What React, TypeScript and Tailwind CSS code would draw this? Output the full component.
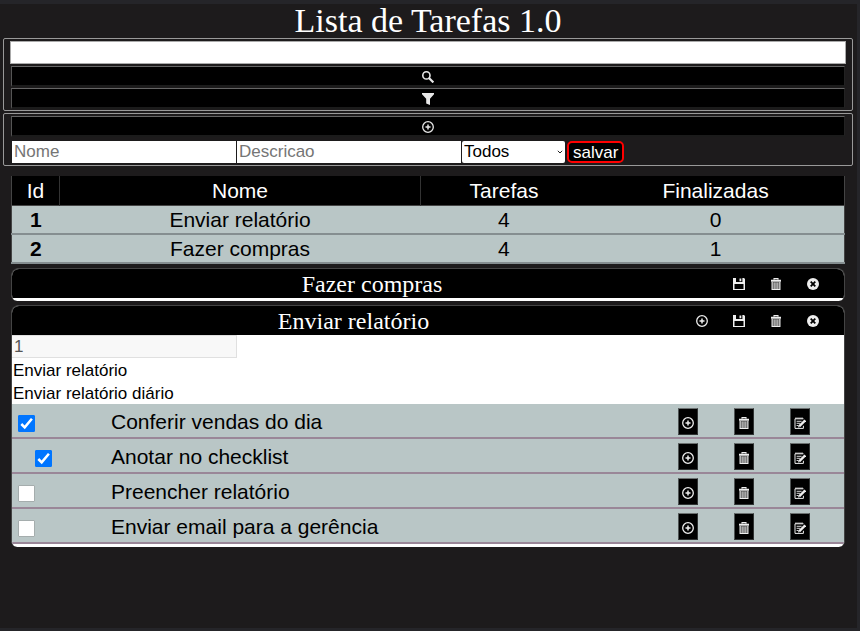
import { useState } from "react";
import type { ReactNode } from "react";

function Icon({ children }: { children: ReactNode }) {
  return (
    <svg viewBox="0 0 12 12" className="block h-3 w-3 shrink-0" fill="none" stroke="currentColor" aria-hidden="true">
      {children}
    </svg>
  );
}

const SearchIcon = () => (
  <Icon>
    <circle cx="4.4" cy="4.4" r="3.6" strokeWidth="1.6" />
    <path d="M7 7l4.400 4.400" strokeWidth="2.200" />
  </Icon>
);

const FilterIcon = () => (
  <Icon>
    <path d="M0 0h12v1.300L8 5.800V12L4.200 10.600V5.800L0 1.300z" fill="currentColor" stroke="none" />
  </Icon>
);

const AddIcon = () => (
  <Icon>
    <circle cx="6" cy="6" r="5.300" strokeWidth="1.300" />
    <path d="M6 3.500v5M3.500 6h5" strokeWidth="1.500" />
  </Icon>
);

const SaveIcon = () => (
  <Icon>
    <path
      fill="currentColor"
      stroke="none"
      fillRule="evenodd"
      d="M0 0h11L12 1V12H0zM3 0v4h6.400V0zM1.500 6v5h9V6zM6.500 0.500h1.800v2.700H6.500z"
    />
  </Icon>
);

const TrashIcon = () => (
  <Icon>
    <path d="M4 1.800V.6h4v1.200" strokeWidth="1.100" />
    <path d="M1 2.700h10" strokeWidth="2" />
    <path d="M1.800 4h8.400v8H1.800z" fill="currentColor" fillOpacity="0.35" stroke="none" />
    <path d="M2.100 4v7.500h7.800V4" strokeWidth="1.100" />
    <path d="M4.200 4.500v6.500M6 4.500v6.500M7.800 4.500v6.500" strokeWidth="0.800" />
  </Icon>
);

const CloseIcon = () => (
  <Icon>
    <circle cx="6" cy="6" r="6" fill="currentColor" stroke="none" />
    <path d="M3.700 3.700l4.600 4.600M8.300 3.700L3.700 8.300" stroke="#000" strokeWidth="1.800" />
  </Icon>
);

const EditIcon = () => (
  <Icon>
    <path d="M9.500 1.800H1v9.600h8.400V8.800" strokeWidth="1" />
    <path d="M2 .4v1.600M4 .4v1.600M6 .4v1.600M8 .4v1.600" strokeWidth="1" />
    <path d="M2.600 4.300h5M2.600 6.300h3.600M2.600 8.500h2" strokeWidth="0.900" />
    <path d="M5.400 9.200L11.300 3.300" strokeWidth="2.500" />
    <path d="M4 10.600l.6-2.200 1.600 1.600z" fill="currentColor" stroke="none" />
  </Icon>
);

function WideButton({ label, children }: { label: string; children: ReactNode }) {
  return (
    <button
      type="button"
      aria-label={label}
      className="mx-px flex h-[21px] items-center justify-center border border-t-[#666] border-r-[#222] border-b-2 border-b-[#1b1b1b] border-l-[#555] bg-black pt-px text-[#e8e8e8]"
    >
      {children}
    </button>
  );
}

function HeaderButton({ label, children }: { label: string; children: ReactNode }) {
  return (
    <button type="button" aria-label={label} className="flex h-full w-[37px] items-center justify-center text-[#eee]">
      {children}
    </button>
  );
}

function RowButton({ label, children }: { label: string; children: ReactNode }) {
  return (
    <button
      type="button"
      aria-label={label}
      className="flex h-[27px] w-5 items-center justify-center border border-t-[#6b7070] border-r-[#303333] border-b-[#303333] border-l-[#505555] bg-black pt-0.5 text-[#eee]"
    >
      {children}
    </button>
  );
}

function Card({ title, canAdd, children }: { title: string; canAdd?: boolean; children?: ReactNode }) {
  return (
    <section className="overflow-hidden rounded-lg rounded-b-md border-x border-t border-[#444] bg-white pb-[3px]">
      <header className="flex h-[29px] items-center bg-black pr-[13px] pl-3 text-white">
        <h2 className="flex-1 text-center font-['Liberation_Serif',serif] text-2xl leading-7">{title}</h2>
        {canAdd && (
          <HeaderButton label="Adicionar"><AddIcon /></HeaderButton>
        )}
        <HeaderButton label="Salvar"><SaveIcon /></HeaderButton>
        <HeaderButton label="Excluir"><TrashIcon /></HeaderButton>
        <HeaderButton label="Fechar"><CloseIcon /></HeaderButton>
      </header>
      {children}
    </section>
  );
}

const lists = [
  { id: 1, name: "Enviar relatório", tasks: 4, done: 0 },
  { id: 2, name: "Fazer compras", tasks: 4, done: 1 },
];

const initialTasks = [
  { name: "Conferir vendas do dia", done: true, nested: false },
  { name: "Anotar no checklist", done: true, nested: true },
  { name: "Preencher relatório", done: false, nested: false },
  { name: "Enviar email para a gerência", done: false, nested: false },
];

export default function App() {
  const [tasks, setTasks] = useState(initialTasks);
  const toggle = (index: number) =>
    setTasks(tasks.map((t, i) => (i === index ? { ...t, done: !t.done } : t)));

  return (
    <main className="min-h-screen border-t-4 border-r-[3px] border-b-[3px] border-[#252529] bg-[#1d1b1c] pr-1 pl-[3px] font-['Liberation_Sans',Arial,sans-serif] text-black">
      <h1 className="text-center font-['Liberation_Serif',serif] text-[34px] leading-[34px] text-white">
        Lista de Tarefas 1.0
      </h1>

      <form className="flex flex-col gap-px rounded-xs border border-[#999] px-1.5 pt-0.5 pb-px" onSubmit={(e) => e.preventDefault()}>
        <input aria-label="Pesquisar" className="mb-px h-[23px] w-full border border-[#aaa] bg-white px-1 text-[17px]" />
        <WideButton label="Pesquisar"><SearchIcon /></WideButton>
        <WideButton label="Filtrar"><FilterIcon /></WideButton>
      </form>

      <form className="mt-0.5 flex flex-col gap-1 rounded-xs border border-[#999] px-1.5 pt-0.5 pb-0.5" onSubmit={(e) => e.preventDefault()}>
        <WideButton label="Adicionar"><AddIcon /></WideButton>
        <div className="ml-0.5 flex h-[22px] gap-px text-[17px]">
          <input aria-label="Nome" placeholder="Nome" className="w-56 bg-white px-0.5 placeholder:text-[#757575]" />
          <input aria-label="Descricao" placeholder="Descricao" className="w-56 bg-white px-0.5 placeholder:text-[#757575]" />
          <div className="relative w-[103px]">
            <select aria-label="Filtro" className="block h-full w-full appearance-none rounded-xs bg-white pl-0.5 leading-[22px]">
              <option>Todos</option>
            </select>
            <svg viewBox="0 0 6 4" className="pointer-events-none absolute top-[9px] right-0.5 h-1 w-1.5" fill="none" stroke="#222" aria-hidden="true">
              <path d="M.8.8L3 3 5.200.8" />
            </svg>
          </div>
          <button type="submit" className="ml-px flex items-center rounded-[5px] border-2 border-[#f00] bg-black px-1 pt-0.5 text-white">
            salvar
          </button>
        </div>
      </form>

      <div className="mt-2.5 mr-2 ml-2 flex flex-col gap-1">
        <table className="w-full table-fixed border-collapse border-x border-[#444] text-center text-[21px] leading-[27px]">
          <colgroup>
            <col className="w-12" />
            <col className="w-[361px]" />
            <col className="w-[20%]" />
            <col />
          </colgroup>
          <thead className="bg-black text-white">
            <tr className="h-[29px] border-b border-[#444]">
              <th className="border-r border-[#333] p-0 font-normal">Id</th>
              <th className="border-r border-[#333] p-0 font-normal">Nome</th>
              <th className="p-0 font-normal">Tarefas</th>
              <th className="p-0 font-normal">Finalizadas</th>
            </tr>
          </thead>
          <tbody className="bg-[#b9c6c6]">
            {lists.map((list) => (
              <tr key={list.id} className="h-[29px] border-b-2 border-[#858e90]">
                <th className="p-0">{list.id}</th>
                <td className="p-0">{list.name}</td>
                <td className="p-0">{list.tasks}</td>
                <td className="p-0">{list.done}</td>
              </tr>
            ))}
          </tbody>
        </table>

        <Card title="Fazer compras" />

        <Card title="Enviar relatório" canAdd>
          <div className="flex flex-col items-start text-[17px]">
            <input aria-label="Id" disabled defaultValue="1" className="h-[23px] w-[225px] border border-l-0 border-[#e0e0e0] bg-[#f8f8f8] px-0.5 text-[#555]" />
            <input aria-label="Nome" defaultValue="Enviar relatório" className="h-[23px] w-full px-px pt-0.5" />
            <input aria-label="Descricao" defaultValue="Enviar relatório diário" className="h-[23px] w-full px-px pt-0.5" />
          </div>
          <ul className="bg-[#b9c6c6]">
            {tasks.map((task, i) => (
              <li key={task.name} className="flex h-[35px] items-center border-b-2 border-[#9a8798] pt-0.5 pr-[34px] text-[21px]">
                <div className={task.nested ? "w-[99px] pt-1 pl-[23px]" : "w-[99px] pt-1 pl-1.5"}>
                  <div className="relative h-[17px] w-[17px]">
                    <input
                      id={`task-${i}`}
                      type="checkbox"
                      checked={task.done}
                      onChange={() => toggle(i)}
                      className="block h-full w-full appearance-none rounded-[1px] border border-[#a5adad] bg-white checked:border-[#0075ff] checked:bg-[#0075ff]"
                    />
                    {task.done && (
                      <svg viewBox="0 0 17 17" className="pointer-events-none absolute inset-0" fill="none" stroke="#fff" strokeWidth="2.500" aria-hidden="true">
                        <path d="M3.300 9l3.400 3.400L13.900 3.800" />
                      </svg>
                    )}
                  </div>
                </div>
                <label htmlFor={`task-${i}`} className="flex-1">{task.name}</label>
                <div className="flex gap-9">
                  <RowButton label="Adicionar"><AddIcon /></RowButton>
                  <RowButton label="Excluir"><TrashIcon /></RowButton>
                  <RowButton label="Editar"><EditIcon /></RowButton>
                </div>
              </li>
            ))}
          </ul>
        </Card>
      </div>
    </main>
  );
}
